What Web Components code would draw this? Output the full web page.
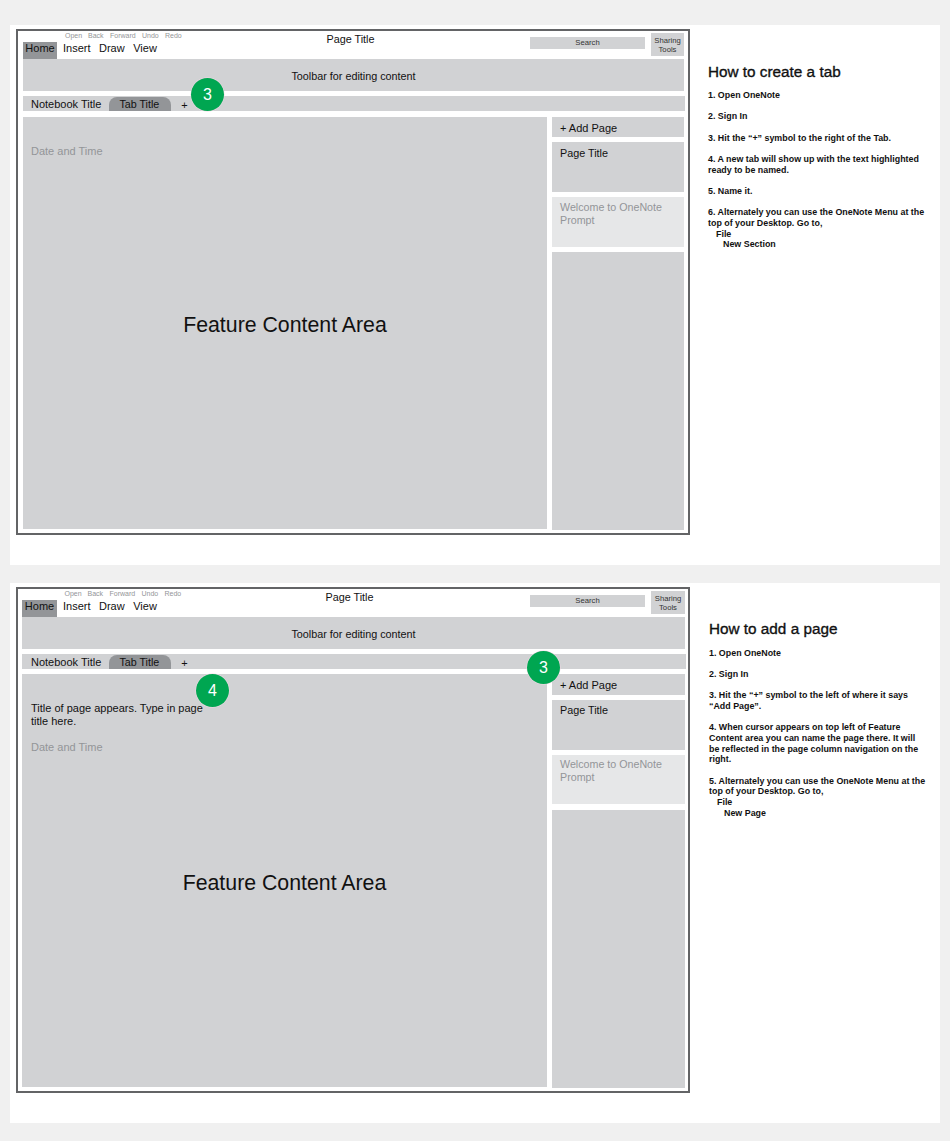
<!DOCTYPE html>
<html><head><meta charset="utf-8">
<style>
html,body{margin:0;background:#f0f0f0;font-family:"Liberation Sans",Arial,sans-serif;color:#111}
body{width:950px;height:1141px;overflow:hidden}
main{display:flex;flex-direction:column;gap:18px;padding:25px 10px 0}
</style></head><body>
<main>
<demo-panel heading="How to create a tab" style="--hx:18px;--hy:33px;--hm:8px">
<wire-screen variant="tab"><badge-dot n="3" style="left:173px;top:47px"></badge-dot></wire-screen>
<p>1. Open OneNote</p>
<p>2. Sign In</p>
<p>3. Hit the “+” symbol to the right of the Tab.</p>
<p>4. A new tab will show up with the text highlighted<br>ready to be named.</p>
<p>5. Name it.</p>
<p>6. Alternately you can use the OneNote Menu at the<br>top of your Desktop. Go to,<br><i>File</i><br><b>New Section</b></p>
</demo-panel>
<demo-panel heading="How to add a page" style="--hx:19px;--hy:32px;--hm:8.5px">
<wire-screen variant="page"><badge-dot n="3" style="left:509px;top:62px"></badge-dot><badge-dot n="4" style="left:178px;top:85px"></badge-dot></wire-screen>
<p>1. Open OneNote</p>
<p>2. Sign In</p>
<p>3. Hit the “+” symbol to the left of where it says<br>“Add Page”.</p>
<p>4. When cursor appears on top left of Feature<br>Content area you can name the page there. It will<br>be reflected in the page column navigation on the<br>right.</p>
<p>5. Alternately you can use the OneNote Menu at the<br>top of your Desktop. Go to,<br><i>File</i><br><b>New Page</b></p>
</demo-panel>
</main>
<template id="panel-t"><style>
:host{display:flex;height:540px;background:#fff;box-sizing:border-box;padding:4px 0 0 6px}
.side{margin-left:var(--hx);padding-top:var(--hy);width:225px}
h2{margin:0 0 var(--hm);font-size:15.3px;line-height:20px;font-weight:400;-webkit-text-stroke:.35px #111;white-space:nowrap}
::slotted(p){margin:0 0 10.67px;font-size:8.9px;line-height:10.67px;font-weight:700;white-space:nowrap}
</style><slot name="screen"></slot><div class="side"><h2></h2><slot></slot></div></template>
<template id="screen-t"><style>
:host{display:block;position:relative;width:674px;height:506px;box-sizing:border-box;border:2px solid #636466;background:#fff;color:#111;--g:#d1d2d4}
.wrap{display:grid;grid-template-rows:28px 32px 15px 1fr;height:100%;padding:0 var(--pr) 0 var(--pl);box-sizing:border-box}
.top{display:flex;align-items:stretch}
.left{width:250px;flex:none;display:flex;flex-direction:column;justify-content:flex-end}
.qa{display:flex;font-size:7px;line-height:8px;color:#939598;padding-left:var(--qa);height:11px;box-sizing:border-box;padding-top:1px}
.qa span:nth-child(1){width:23px}.qa span:nth-child(2){width:22px}.qa span:nth-child(3){width:32px}.qa span:nth-child(4){width:23px}
.menu{display:flex;height:17px;font-size:11px;line-height:13px}
.menu span{margin-right:8.5px}
.menu .home{width:var(--hw);margin-right:6px;background:#939598;text-align:center;box-sizing:border-box}
.title{width:155px;flex:none;text-align:center;font-size:10.8px;line-height:13px;padding-top:2px}
.search{margin-left:auto;width:115px;height:11.5px;margin-top:6px;background:var(--g);text-align:center;font-size:7.7px;line-height:12px;color:#333}
.share{width:var(--sw);height:23px;margin:2px 0 0 6px;background:var(--g);text-align:center;font-size:7.7px;line-height:9px;padding-top:3px;box-sizing:border-box;color:#333}
.bar{background:var(--g);display:flex;align-items:center;justify-content:center;font-size:10.8px;padding-top:2px;box-sizing:border-box}
.tabs{margin-top:5px;height:15px;background:var(--g);margin-right:-1px;display:flex;align-items:stretch;font-size:11px;line-height:17px;padding-left:var(--tp)}
.tab{margin:1px 0 0 8px;width:62px;background:#939598;border-radius:8px 8px 0 0;text-align:center;line-height:14px;font-size:10.7px;padding-right:2px;box-sizing:border-box}
.plus{margin-left:10px;line-height:18px}
.body{display:grid;grid-template-columns:var(--mw) 1fr;column-gap:5px;margin-top:var(--bt);min-height:0}
.main{background:var(--g);display:grid;height:var(--mh)}
.main>*{grid-area:1/1}
.head{padding:27.5px 0 0 var(--hp);font-size:11px;line-height:13px}
.head p{margin:0 0 13px;width:172px}
.date{color:#939598}
.feature{align-self:center;justify-self:center;font-size:21.3px;line-height:26px;margin-top:var(--ft)}
.col{display:flex;flex-direction:column;gap:5px;height:var(--ch)}
.col div{background:var(--g);font-size:11px;line-height:13px;padding:4px 8px;box-sizing:border-box}
.add{height:var(--ah);padding-top:5px!important}
.col .pg{height:50px;font-size:10.8px;padding-top:var(--pt)}
.col .wel{height:var(--wh);background:#e6e7e8;color:#939598;font-size:10.7px;padding-top:var(--wt)}
.rest{flex:1;margin-top:var(--rt)}
</style>
<div class="wrap">
<div class="top"><div class="left"><div class="qa"><span>Open</span><span>Back</span><span>Forward</span><span>Undo</span><span>Redo</span></div>
<div class="menu"><span class="home">Home</span><span>Insert</span><span>Draw</span><span>View</span></div></div>
<div class="title">Page Title</div><div class="search">Search</div><div class="share">Sharing Tools</div></div>
<div class="bar">Toolbar for editing content</div>
<div class="tabs"><span>Notebook Title</span><span class="tab">Tab Title</span><span class="plus">+</span></div>
<div class="body"><div class="main"><div class="head"><p class="pt">Title of page appears. Type in page title here.</p><div class="date">Date and Time</div></div><div class="feature">Feature Content Area</div></div>
<div class="col"><div class="add">+ Add Page</div><div class="pg">Page Title</div><div class="wel">Welcome to OneNote Prompt</div><div class="rest"></div></div></div>
</div><slot></slot></template>
<script>
const mount=(el,id)=>{const s=el.attachShadow({mode:'open'});s.appendChild(document.getElementById(id).content.cloneNode(true));return s};
class DemoPanel extends HTMLElement{constructor(){super();this.s=mount(this,'panel-t')}
 connectedCallback(){this.s.querySelector('h2').textContent=this.getAttribute('heading');
  const sc=this.querySelector('wire-screen');sc.slot='screen';
  this.querySelectorAll('i').forEach(e=>{e.style.cssText='font-style:normal;margin-left:8px'});
  this.querySelectorAll('p b').forEach(e=>{e.style.cssText='margin-left:15px'});}}
class WireScreen extends HTMLElement{constructor(){super();this.s=mount(this,'screen-t')}
 connectedCallback(){const p=this.getAttribute('variant')==='page';const st=this.style;
  const v=p?{'--pl':'4px','--pr':'3px','--qa':'42.5px','--hw':'35px','--mh':'413px','--ch':'414px','--ft':'5px','--mw':'525px','--sw':'34px','--tp':'9px','--bt':'10px','--ah':'21px','--wh':'49px','--rt':'1px','--hp':'9px','--pt':'4px','--wt':'3px'}
           :{'--pl':'5px','--pr':'4px','--qa':'42px','--hw':'34px','--mh':'412px','--ch':'413px','--ft':'4px','--mw':'524px','--sw':'33px','--tp':'8px','--bt':'11px','--ah':'20px','--wh':'50px','--rt':'0px','--hp':'8px','--pt':'5px','--wt':'4px'};
  for(const k in v)st.setProperty(k,v[k]);
  if(!p)this.s.querySelector('.pt').remove();}}
class BadgeDot extends HTMLElement{constructor(){super();const s=this.attachShadow({mode:'open'});
 s.innerHTML=`<style>:host{position:absolute;display:flex;align-items:center;justify-content:center;width:33px;height:33px;border-radius:50%;background:#00a651;color:#fff;font-size:16px;box-shadow:0 0 0 .5px #f3d9e6}</style><slot></slot>`;}
 connectedCallback(){this.textContent=this.getAttribute('n')}}
customElements.define('demo-panel',DemoPanel);customElements.define('wire-screen',WireScreen);customElements.define('badge-dot',BadgeDot);
</script>
</body></html>
